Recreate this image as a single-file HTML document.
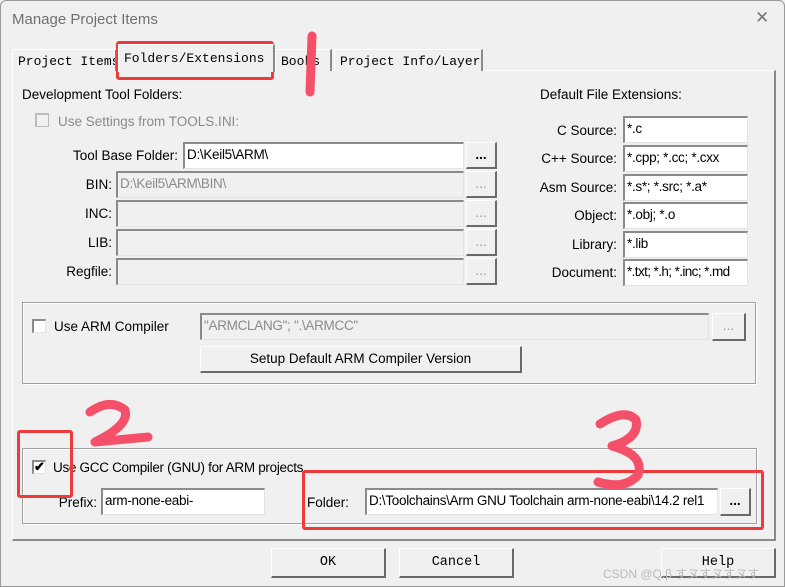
<!DOCTYPE html>
<html><head><meta charset="utf-8"><style>
*{box-sizing:border-box;margin:0;padding:0}
body{width:785px;height:587px;background:#f0f0f0;font-family:"Liberation Sans",sans-serif;font-size:13.5px;color:#000;position:relative;overflow:hidden}
.a{position:absolute;white-space:nowrap}
.win{position:absolute;left:0;top:0;width:785px;height:587px;border:1px solid #9a9a9a;border-radius:6px 6px 0 0}
.tab{position:absolute;font-family:"Liberation Mono",monospace;font-size:13px;border:1px solid #fff;border-right:2px solid #8a8a8a;border-bottom:none;background:#f0f0f0;padding:4px 5px 0 5px;white-space:nowrap;overflow:hidden}
.panel{position:absolute;left:12px;top:70px;width:764px;height:471px;border-left:1px solid #fff;border-top:1px solid #fff;border-right:2px solid #8a8a8a;border-bottom:2px solid #8a8a8a}
.in{position:absolute;height:27px;background:#fff;border-top:2px solid #8a8a8a;border-left:2px solid #8a8a8a;border-right:1px solid #e3e3e3;border-bottom:1px solid #e3e3e3;padding:3px 2px;font-size:13.5px;overflow:hidden;white-space:nowrap;letter-spacing:-0.3px}
.dis{background:#f0f0f0;color:#8a8a8a}
.btn{position:absolute;background:#f0f0f0;border-top:1px solid #fff;border-left:1px solid #fff;border-right:2px solid #6a6a6a;border-bottom:2px solid #6a6a6a;text-align:center;font-size:13.5px;white-space:nowrap}
.lbl{position:absolute;text-align:right;white-space:nowrap}
.grp{position:absolute;border:1px solid #a0a0a0;box-shadow:1px 1px 0 #fff inset,1px 1px 0 #fff}
.cb{position:absolute;width:14px;height:14px;background:#fff;border-top:2px solid #8a8a8a;border-left:2px solid #8a8a8a;border-right:1px solid #e3e3e3;border-bottom:1px solid #e3e3e3}
.red{position:absolute;border:3px solid #f03a3a;border-radius:3px}
</style></head><body>
<div class="win"></div>
<div class="a" style="left:12px;top:11px;font-size:15px;color:#707070">Manage Project Items</div>
<div class="a" style="left:755px;top:8px;font-size:17px;color:#777;font-weight:300">✕</div>
<div class="panel"></div>
<div class="tab" style="left:12px;top:49px;width:105px;height:22px">Project Items</div>
<div class="tab" style="left:275px;top:49px;width:57px;height:22px">Books</div>
<div class="tab" style="left:334px;top:49px;width:149px;height:22px">Project Info/Layer</div>
<div class="tab" style="left:118px;top:44px;width:157px;height:28px;border-bottom:none;padding-top:6px;z-index:2">Folders/Extensions</div>

<div class="a" style="left:22px;top:87px">Development Tool Folders:</div>
<div class="cb" style="left:35px;top:113px;background:#f0f0f0;border-color:#bbb"></div>
<div class="a" style="left:58px;top:114px;color:#8a8a8a">Use Settings from TOOLS.INI:</div>

<div class="lbl" style="left:30px;width:148px;top:148px">Tool Base Folder:</div>
<div class="in" style="left:183px;top:142px;width:281px">D:\Keil5\ARM\</div>
<div class="btn" style="left:466px;top:142px;width:31px;height:27px;font-weight:bold;line-height:24px">...</div>
<div class="lbl" style="left:40px;width:72px;top:177px">BIN:</div>
<div class="in dis" style="left:116px;top:171px;width:348px">D:\Keil5\ARM\BIN\</div>
<div class="btn" style="left:466px;top:171px;width:31px;height:27px;color:#999;line-height:24px">...</div>
<div class="lbl" style="left:40px;width:72px;top:206px">INC:</div>
<div class="in dis" style="left:116px;top:200px;width:348px"></div>
<div class="btn" style="left:466px;top:200px;width:31px;height:27px;color:#999;line-height:24px">...</div>
<div class="lbl" style="left:40px;width:72px;top:235px">LIB:</div>
<div class="in dis" style="left:116px;top:229px;width:348px"></div>
<div class="btn" style="left:466px;top:229px;width:31px;height:27px;color:#999;line-height:24px">...</div>
<div class="lbl" style="left:40px;width:72px;top:264px">Regfile:</div>
<div class="in dis" style="left:116px;top:258px;width:348px"></div>
<div class="btn" style="left:466px;top:258px;width:31px;height:27px;color:#999;line-height:24px">...</div>

<div class="a" style="left:540px;top:87px">Default File Extensions:</div>
<div class="lbl" style="left:500px;width:117px;top:123px">C Source:</div>
<div class="in" style="left:623px;top:116px;width:125px">*.c</div>
<div class="lbl" style="left:500px;width:117px;top:151px">C++ Source:</div>
<div class="in" style="left:623px;top:145px;width:125px">*.cpp; *.cc; *.cxx</div>
<div class="lbl" style="left:500px;width:117px;top:180px">Asm Source:</div>
<div class="in" style="left:623px;top:174px;width:125px">*.s*; *.src; *.a*</div>
<div class="lbl" style="left:500px;width:117px;top:208px">Object:</div>
<div class="in" style="left:623px;top:202px;width:125px">*.obj; *.o</div>
<div class="lbl" style="left:500px;width:117px;top:237px">Library:</div>
<div class="in" style="left:623px;top:231px;width:125px">*.lib</div>
<div class="lbl" style="left:500px;width:117px;top:265px">Document:</div>
<div class="in" style="left:623px;top:259px;width:125px;letter-spacing:-0.6px">*.txt; *.h; *.inc; *.md</div>

<div class="grp" style="left:22px;top:302px;width:734px;height:82px"></div>
<div class="cb" style="left:32px;top:319px"></div>
<div class="a" style="left:54px;top:319px">Use ARM Compiler</div>
<div class="in dis" style="left:200px;top:313px;width:509px">"ARMCLANG"; ".\ARMCC"</div>
<div class="btn" style="left:712px;top:313px;width:34px;height:28px;color:#999;line-height:24px">...</div>
<div class="btn" style="left:200px;top:346px;width:322px;height:27px;line-height:24px">Setup Default ARM Compiler Version</div>

<div class="grp" style="left:22px;top:448px;width:735px;height:76px"></div>
<div class="cb" style="left:32px;top:460px;font-size:13px;line-height:10px;text-align:center;font-weight:bold">✔</div>
<div class="a" style="left:53px;top:460px;letter-spacing:-0.3px">Use GCC Compiler (GNU) for ARM projects</div>
<div class="lbl" style="left:40px;width:57px;top:495px">Prefix:</div>
<div class="in" style="left:101px;top:488px;width:164px">arm-none-eabi-</div>
<div class="a" style="left:307px;top:495px">Folder:</div>
<div class="in" style="left:365px;top:488px;width:353px">D:\Toolchains\Arm GNU Toolchain arm-none-eabi\14.2 rel1</div>
<div class="btn" style="left:720px;top:488px;width:31px;height:28px;font-weight:bold;line-height:24px">...</div>

<div class="btn" style="left:271px;top:548px;width:115px;height:30px;font-family:'Liberation Mono',monospace;line-height:27px">OK</div>
<div class="btn" style="left:399px;top:548px;width:115px;height:30px;font-family:'Liberation Mono',monospace;line-height:27px">Cancel</div>
<div class="btn" style="left:661px;top:548px;width:115px;height:30px;font-family:'Liberation Mono',monospace;line-height:27px">Help</div>
<div class="a" style="left:603px;top:565px;font-size:12px;color:#bbb">CSDN @Q.β すヌすヌすヌす</div>

<div class="red" style="left:116px;top:41px;width:158px;height:39px"></div>
<div class="red" style="left:17px;top:430px;width:56px;height:68px"></div>
<div class="red" style="left:302px;top:470px;width:462px;height:60px"></div>
<svg class="a" style="left:0;top:0" width="785" height="587">
<g fill="none" stroke="#f5506a" stroke-width="9" stroke-linecap="round" stroke-linejoin="round">
<path d="M312 36 L310 92"/>
<path d="M90 412 Q110 398 125 410 Q130 425 95 442 L148 437"/>
<path d="M600 424 Q625 408 636 420 Q640 438 612 446 Q645 455 638 475 Q625 490 598 482"/>
</g></svg>
</body></html>
